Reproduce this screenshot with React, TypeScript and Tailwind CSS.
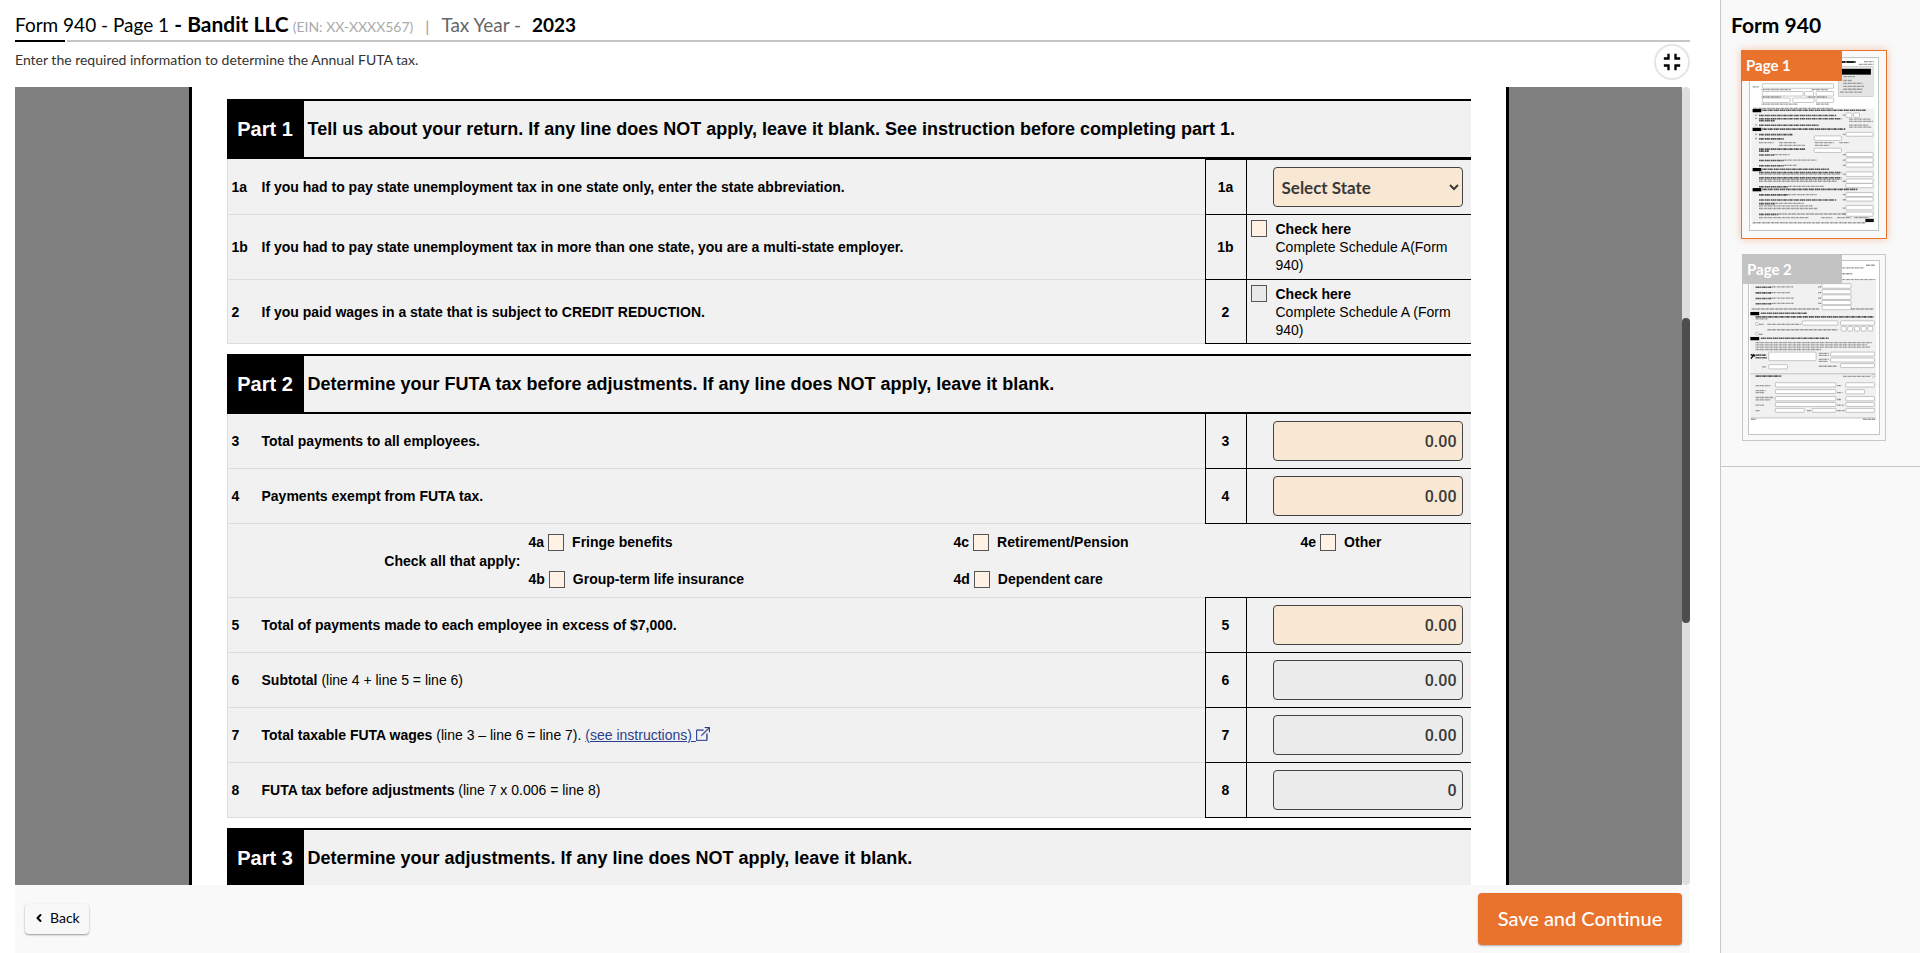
import { ChevronLeft } from "lucide-react";
import { BsBoxArrowUpRight } from "react-icons/bs";
import { MdFullscreenExit } from "react-icons/md";
import type { ReactNode } from "react";

type Bar = [x: number, y: number, w: number];
type Box = [x: number, y: number, w: number, h: number];

const states = ["Select State", "AL", "AK", "AZ", "CA", "FL", "NY", "TX"];

const page1 = {
  sections: [[8, 155], [8, 213], [8, 337], [8, 399]],
  titles: [
    [38, 155, 320], [38, 213, 256], [38, 337, 206], [38, 399, 294], [28, 171, 238], [28, 181, 254], [28, 187, 48],
    [28, 201, 184], [28, 230, 104], [28, 243, 76], [28, 275, 144], [28, 281, 30], [28, 293, 46], [28, 310, 76], [28, 326, 76],
    [28, 347, 254], [28, 363, 254], [28, 391, 90], [28, 416, 88], [28, 432, 238], [28, 443, 48], [28, 476, 60],
  ] as Bar[],
  lines: [
    [10, 150, 246], [16, 171, 6], [16, 181, 6], [16, 201, 6], [16, 230, 6], [16, 243, 6],
    [28, 256, 46], [90, 256, 52], [200, 256, 58], [276, 256, 30], [90, 264, 80], [200, 264, 46],
    [74, 293, 48], [104, 310, 102], [104, 326, 42],
    [28, 353, 250], [28, 369, 254], [28, 375, 240], [118, 391, 110],
    [116, 416, 90], [76, 443, 90], [28, 451, 166], [28, 459, 180], [88, 476, 208],
    [28, 487, 154], [220, 487, 34], [268, 487, 44], [322, 487, 44], [8, 503, 350],
    [8, 84, 20], [36, 92, 90], [190, 92, 50], [36, 115, 60], [178, 115, 60], [36, 137, 110], [204, 137, 40],
    [352, 6, 30], [336, 14, 46], [288, 52, 36], [288, 64, 28], [288, 73, 60], [288, 82, 64], [288, 91, 60], [278, 100, 70],
    [306, 183, 66], [306, 190, 74], [306, 202, 60], [306, 208, 70],
    [286, 171, 8], [286, 230, 8], [286, 293, 8], [286, 310, 8], [286, 326, 8], [286, 353, 8], [286, 375, 8], [286, 416, 8], [286, 432, 8], [286, 458, 8], [286, 476, 8],
  ] as Bar[],
  boxes: [
    [38, 76, 220, 14], [38, 100, 126, 14], [168, 100, 28, 14], [204, 100, 54, 14], [38, 120, 86, 14], [132, 120, 66, 14],
    [204, 120, 54, 14], [296, 166, 18, 14], [320, 166, 18, 14], [296, 226, 84, 12], [198, 237, 84, 14], [198, 275, 84, 13],
    [296, 288, 84, 13], [296, 305, 84, 13], [296, 320, 84, 13], [296, 348, 84, 14], [296, 370, 84, 13], [296, 384, 84, 13],
    [296, 412, 84, 12], [296, 426, 84, 12], [296, 452, 84, 13], [296, 472, 84, 13],
  ] as Box[],
};

const page2 = {
  sections: [[4, 155], [4, 231]],
  titles: [[36, 155, 140], [36, 231, 206], [20, 346, 78], [20, 76, 48], [20, 93, 48], [20, 110, 48], [20, 126, 48], [20, 166, 360], [20, 282, 32], [20, 290, 36]] as Bar[],
  lines: [
    [70, 76, 64], [70, 93, 54], [70, 110, 66], [70, 126, 66], [8, 143, 206], [310, 143, 70],
    [210, 76, 10], [210, 93, 10], [210, 110, 10], [210, 126, 10],
    [20, 173, 36], [30, 190, 16], [56, 190, 102], [56, 206, 214], [30, 220, 12],
    [20, 245, 354], [20, 252, 340], [20, 259, 348], [20, 266, 200], [40, 319, 14],
    [212, 278, 30], [212, 284, 30], [212, 296, 30], [212, 302, 28], [212, 317, 56], [286, 348, 84],
    [20, 376, 46], [20, 391, 30], [20, 397, 26], [20, 412, 56], [20, 419, 46], [20, 435, 28], [20, 452, 12], [176, 452, 14],
    [268, 376, 12], [268, 397, 16], [268, 418, 12], [268, 435, 20], [268, 452, 22], [6, 478, 16], [346, 478, 38],
    [280, 18, 70], [280, 36, 34], [280, 54, 104], [356, 10, 28],
  ] as Bar[],
  boxes: [
    [222, 68, 88, 14], [222, 86, 88, 13], [222, 102, 88, 14], [222, 119, 88, 13], [222, 134, 88, 13],
    [162, 181, 108, 13], [278, 181, 103, 13], [280, 198, 15, 14], [300, 198, 15, 14], [321, 198, 15, 14], [341, 198, 15, 14],
    [361, 198, 15, 14], [20, 186, 8, 9], [20, 216, 8, 8], [60, 276, 144, 26], [248, 276, 133, 12], [248, 294, 133, 12], [278, 311, 103, 12],
    [60, 314, 57, 13], [374, 344, 8, 8], [80, 369, 184, 13], [294, 369, 87, 13], [80, 390, 184, 12], [294, 390, 57, 13], [80, 411, 184, 13],
    [294, 411, 87, 13], [80, 429, 184, 12], [294, 429, 87, 12], [80, 447, 88, 12], [192, 447, 72, 12], [294, 447, 87, 12],
  ] as Box[],
};

function PagePreview({ page, children }: { page: typeof page1; children?: ReactNode }) {
  return (
    <svg viewBox="0 0 395 524" className="block h-full w-full" aria-hidden="true">
      <rect width="395" height="524" fill="#fff" />
      {children}
      {page.boxes.map(([x, y, w, h], i) => (
        <rect key={i} x={x} y={y} width={w} height={h} rx="2" fill="#fff" stroke="#a8a8a8" strokeWidth="2" />
      ))}
      {page.lines.map(([x, y, w], i) => (
        <path key={i} d={`M${x} ${y + 2}h${w}`} stroke="#8c8c8c" strokeWidth="4" strokeDasharray="3 1 5 1 2 2" />
      ))}
      {page.titles.map(([x, y, w], i) => (
        <path key={i} d={`M${x} ${y + 3}h${w}`} stroke="#505050" strokeWidth="5" strokeDasharray="4 1 7 1 3 2" />
      ))}
      {page.sections.map(([x, y]) => (
        <rect key={y} x={x} y={y - 1} width="27" height="10" />
      ))}
    </svg>
  );
}

function PartHeader({ part, children }: { part: string; children: ReactNode }) {
  return (
    <div className="flex h-[60px] border-y-2 border-black bg-[#f1f1f1]">
      <div className="flex w-[77px] items-center justify-center bg-black text-xl font-bold text-white">{part}</div>
      <h2 className="flex items-center pl-1 text-lg font-bold">{children}</h2>
    </div>
  );
}

function Row({ no, text, height = "h-[55px]", line = "", children }: {
  no: string;
  text: ReactNode;
  height?: string;
  line?: string;
  children: ReactNode;
}) {
  return (
    <tr className={height}>
      <td className={`border-b border-l border-[#ddd] p-0 ${line === "all" ? "border-t" : ""}`}>
        <div className="flex items-center pl-1">
          <span className="w-[30px] font-bold">{no}</span>
          <span>{text}</span>
        </div>
      </td>
      <td className={`border-b border-l border-black p-0 text-center font-bold ${line ? "border-t" : ""}`}>{no}</td>
      <td className={`border-b border-l border-black p-0 ${line ? "border-t" : ""}`}>{children}</td>
    </tr>
  );
}

function Amount({ label, value, locked }: { label: string; value: string; locked?: boolean }) {
  return (
    <input
      aria-label={label}
      defaultValue={value}
      readOnly={locked}
      className={`ml-[26px] block h-10 w-[190px] rounded border border-[#444] px-[5px] text-right font-[Roboto,sans-serif] text-base font-medium text-[#3a3a3a] ${locked ? "bg-[#ebebeb]" : "bg-[#f8e8d3]"}`}
    />
  );
}

function Check({ id, locked }: { id: string; locked?: boolean }) {
  return (
    <input
      id={id}
      type="checkbox"
      disabled={locked}
      className={`h-[17px] w-4 shrink-0 appearance-none border border-[#555] ${locked ? "bg-[#e9e9e9]" : "bg-[#fff2e5]"}`}
    />
  );
}

function Schedule({ id, text, locked }: { id: string; text: string; locked?: boolean }) {
  return (
    <div className="flex gap-[9px] pl-1 leading-[18px]">
      <Check id={id} locked={locked} />
      <label htmlFor={id} className="w-[180px]">
        <b className="block">Check here</b>
        {text}
      </label>
    </div>
  );
}

function Benefit({ no, label }: { no: string; label: string }) {
  return (
    <div className="flex items-center gap-1 font-bold">
      <span>{no}</span>
      <Check id={no} />
      <label htmlFor={no} className="pl-1">{label}</label>
    </div>
  );
}

function FormTable({ children }: { children: ReactNode }) {
  return (
    <table className="mb-2.5 w-full table-fixed border-separate border-spacing-0 bg-[#f1f1f1] text-sm">
      <colgroup>
        <col />
        <col className="w-[41px]" />
        <col className="w-[225px]" />
      </colgroup>
      <tbody>{children}</tbody>
    </table>
  );
}

export default function App() {
  return (
    <div className="flex h-screen overflow-hidden bg-white font-[Lato,sans-serif] text-black">
      <main className="flex min-w-0 flex-1 flex-col pr-[30px] pl-[15px]">
        <header>
          <h1 className="flex h-10 items-baseline pt-2 text-[19px] whitespace-pre">
            <span>Form 940 - Page 1</span>
            <b className="text-[21px]"> - Bandit LLC</b>
            <span className="pl-1 text-sm text-[#aaa]">(EIN: XX-XXXX567)</span>
            <span className="px-3 text-base text-[#999]">|</span>
            <span className="text-[#666]">Tax Year - </span>
            <b className="pl-1.5">2023</b>
          </h1>
          <div className="flex h-0.5 gap-0.5">
            <div className="w-[50px] bg-black" />
            <div className="flex-1 bg-[#c5c5c5]" />
          </div>
          <div className="flex h-[45px] items-start justify-between">
            <p className="pt-2 text-sm text-[#333]">Enter the required information to determine the Annual FUTA tax.</p>
            <button aria-label="Exit full screen" className="mt-0.5 flex size-9 items-center justify-center rounded-full border-2 border-[#e5e5e5] bg-white">
              <MdFullscreenExit className="size-7" />
            </button>
          </div>
        </header>

        <div className="flex min-h-0 flex-1">
          <div className="flex-1 overflow-hidden bg-[#808080] font-['Liberation_Sans',Arial,sans-serif]">
            <div className="mx-auto max-w-[1320px] border-x-3 border-black bg-white px-[35px] pt-3">
              <PartHeader part="Part 1">
                Tell us about your return. If any line does NOT apply, leave it blank. See instruction before completing part 1.
              </PartHeader>
              <FormTable>
                <Row no="1a" height="h-14" line="side" text={<b>If you had to pay state unemployment tax in one state only, enter the state abbreviation.</b>}>
                  <select aria-label="State" className="ml-[26px] block h-10 w-[190px] rounded border border-[#444] bg-[#f8e8d3] px-1 font-[Lato,sans-serif] text-[17px] font-bold text-[#3a3a3a]">
                    {states.map((state) => (
                      <option key={state}>{state}</option>
                    ))}
                  </select>
                </Row>
                <Row no="1b" height="h-[65px]" text={<b>If you had to pay state unemployment tax in more than one state, you are a multi-state employer.</b>}>
                  <Schedule id="multi" text="Complete Schedule A(Form 940)" />
                </Row>
                <Row no="2" height="h-16" text={<b>If you paid wages in a state that is subject to CREDIT REDUCTION.</b>}>
                  <Schedule id="credit" text="Complete Schedule A (Form 940)" locked />
                </Row>
              </FormTable>

              <PartHeader part="Part 2">
                Determine your FUTA tax before adjustments. If any line does NOT apply, leave it blank.
              </PartHeader>
              <FormTable>
                <Row no="3" text={<b>Total payments to all employees.</b>}>
                  <Amount label="Line 3" value="0.00" />
                </Row>
                <Row no="4" text={<b>Payments exempt from FUTA tax.</b>}>
                  <Amount label="Line 4" value="0.00" />
                </Row>
                <tr className="h-[73px]">
                  <td colSpan={3} className="border-x border-[#ddd] p-0">
                    <div className="flex items-center">
                      <b className="w-[301px] pr-2 text-right">Check all that apply:</b>
                      <div className="flex w-[425px] flex-col gap-[17px]">
                        <Benefit no="4a" label="Fringe benefits" />
                        <Benefit no="4b" label="Group-term life insurance" />
                      </div>
                      <div className="flex w-[347px] flex-col gap-[17px]">
                        <Benefit no="4c" label="Retirement/Pension" />
                        <Benefit no="4d" label="Dependent care" />
                      </div>
                      <div className="self-start">
                        <Benefit no="4e" label="Other" />
                      </div>
                    </div>
                  </td>
                </tr>
                <Row no="5" height="h-14" line="all" text={<b>Total of payments made to each employee in excess of $7,000.</b>}>
                  <Amount label="Line 5" value="0.00" />
                </Row>
                <Row no="6" text={<><b>Subtotal</b> (line 4 + line 5 = line 6)</>}>
                  <Amount label="Line 6" value="0.00" locked />
                </Row>
                <Row
                  no="7"
                  text={
                    <>
                      <b>Total taxable FUTA wages</b> (line 3 – line 6 = line 7).{" "}
                      <a href="#instructions" className="text-[#2b3f8c] underline">
                        (see instructions) <BsBoxArrowUpRight className="inline size-3.5 stroke-[#2b3f8c] stroke-[0.5] align-[-1px]" />
                      </a>
                    </>
                  }
                >
                  <Amount label="Line 7" value="0.00" locked />
                </Row>
                <Row no="8" text={<><b>FUTA tax before adjustments</b> (line 7 x 0.006 = line 8)</>}>
                  <Amount label="Line 8" value="0" locked />
                </Row>
              </FormTable>

              <PartHeader part="Part 3">
                Determine your adjustments. If any line does NOT apply, leave it blank.
              </PartHeader>
            </div>
          </div>
          <div className="w-2 rounded bg-[#dedede] pt-[231px]">
            <div className="h-[305px] rounded bg-[#4d4d4d]" />
          </div>
        </div>

        <footer className="flex h-[68px] items-center justify-between bg-[#f9f9f9] pr-2 pl-2.5">
          <button className="flex h-[30px] items-center gap-1 rounded bg-[#f8f8f8] px-2 pb-0.5 text-sm shadow-[0_1px_2px_rgba(0,0,0,0.4)]">
            <ChevronLeft className="size-3" strokeWidth={4} />
            <span className="px-px">Back</span>
          </button>
          <button className="h-[52px] w-[204px] rounded bg-[#e9722d] pb-0.5 text-xl font-medium text-white shadow-[0_1px_2px_rgba(0,0,0,0.3)]">
            Save and Continue
          </button>
        </footer>
      </main>

      <aside className="w-[200px] border-l border-[#c8c8c8] bg-[#f9f9f9]">
        <div className="flex flex-col border-b border-[#c8c8c8] pb-[25px] pl-2.5">
          <h2 className="flex h-[50px] items-center text-[21px] font-bold">Form 940</h2>
          <a href="#page-1" className="relative ml-2.5 block h-[189px] w-[146px] border border-[#e9722d] p-[7px] pt-1.5 shadow-[0_0_8px_rgba(233,114,45,0.4)]">
            <span className="block h-full border border-[#c5c5c5]">
              <PagePreview page={page1}>
                <rect x="4" y="152" width="380" height="350" fill="#f1f1f1" />
                <rect x="272" y="22" width="108" height="94" fill="#e5e5e5" stroke="#999" />
                <rect x="278" y="30" width="95" height="18" />
                <path d="M283 9h44" stroke="#222" strokeWidth="6" strokeDasharray="12 2 26 2" />
                <rect x="356" y="493" width="26" height="10" fill="#111" />
              </PagePreview>
            </span>
            <span className="absolute -top-px -left-px flex h-[31px] w-[101px] items-center bg-[#e9722d] pl-[5px] text-[15px] font-bold text-white">
              Page 1
            </span>
          </a>
          <a href="#page-2" className="relative mt-[15px] ml-[11px] block h-[187px] w-36 border border-[#c8c8c8] p-[5px]">
            <span className="block h-full border border-[#c5c5c5]">
              <PagePreview page={page2}>
                <rect x="4" y="60" width="382" height="416" fill="#f1f1f1" />
                <path d="M4 342h380M4 476h382" stroke="#aaa" strokeWidth="2" />
                <path d="M6 296l10-14M5 284l14 4" stroke="#000" strokeWidth="4" />
              </PagePreview>
            </span>
            <span className="absolute -top-px -left-px flex h-[30px] w-[100px] items-center bg-[#c3c3c3] pl-[5px] text-[15px] font-bold text-white">
              Page 2
            </span>
          </a>
        </div>
      </aside>
    </div>
  );
}
